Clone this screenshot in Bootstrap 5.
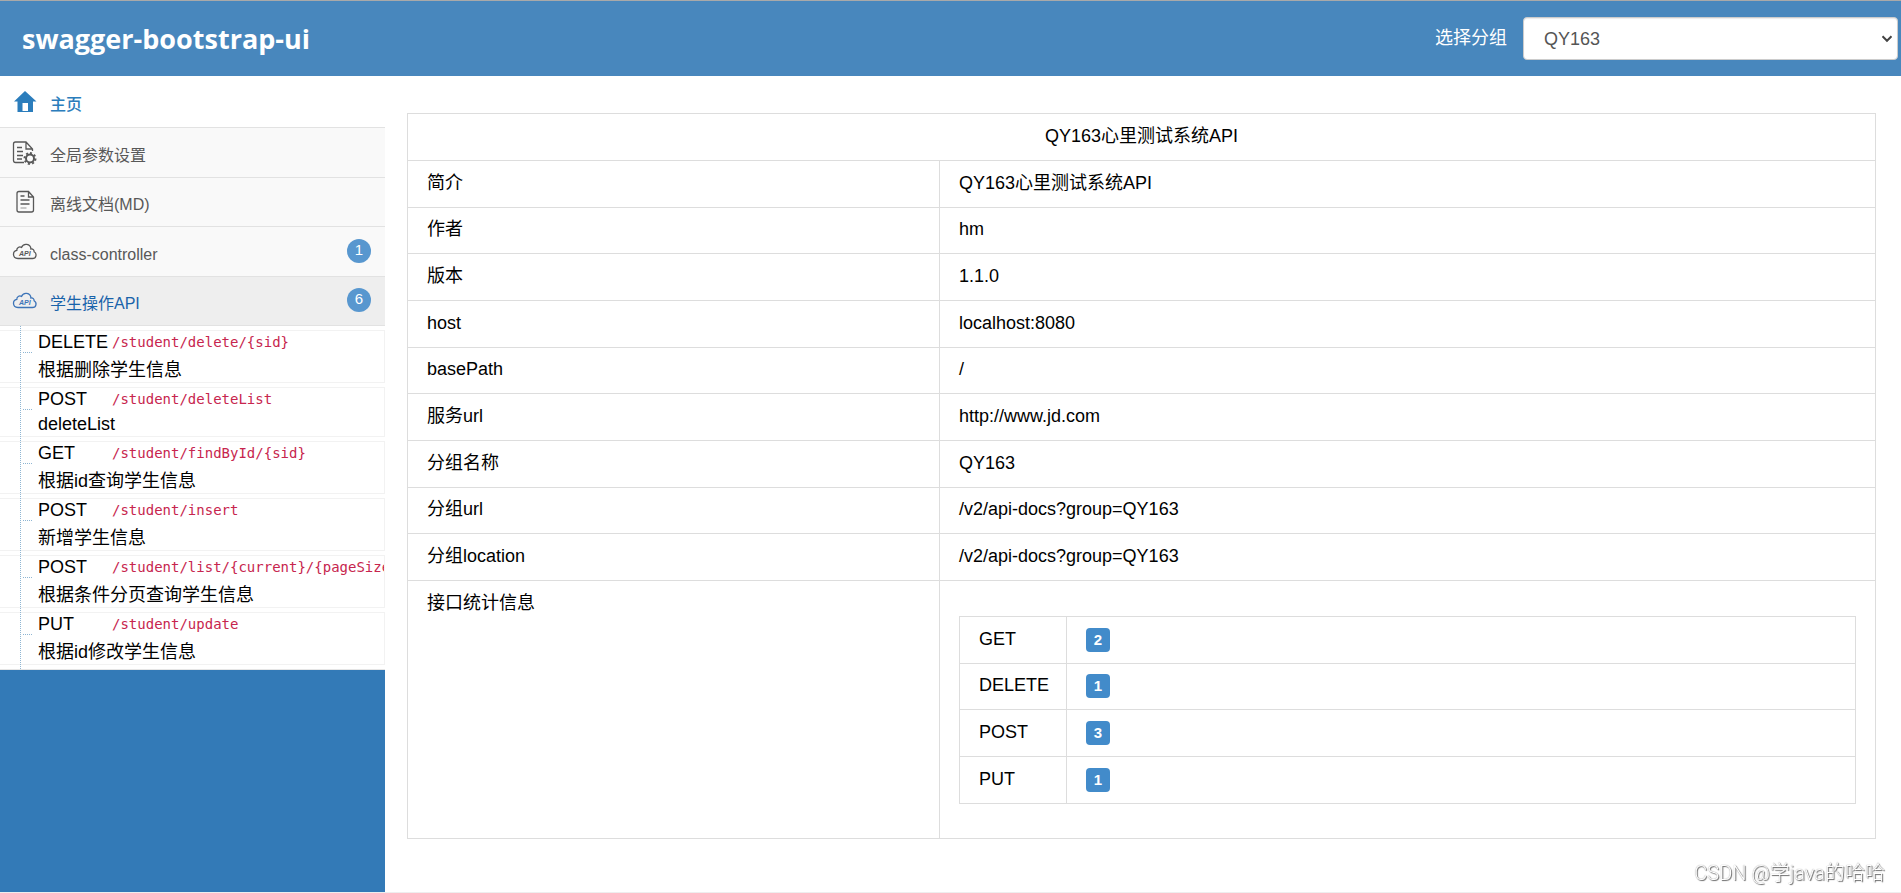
<!DOCTYPE html>
<html lang="zh-CN">
<head>
<meta charset="utf-8">
<meta name="viewport" content="width=device-width, initial-scale=1">
<title>swagger-bootstrap-ui</title>
<link href="https://cdn.jsdelivr.net/npm/bootstrap@5.3.0/dist/css/bootstrap.min.css" rel="stylesheet">
<style>
body { font-family: "Liberation Sans", "Noto Sans CJK SC", sans-serif; font-size: 18px; line-height: 25px; color: #000; background: #fff; }
.top-bar { height: 76px; background: #4887bd; border-top: 1px solid #a9a9a9; padding: 0 3px 0 22px; color: #fff; }
.brand { font-family: "Open Sans", "Noto Sans CJK SC", sans-serif; font-size: 27px; font-weight: 700; line-height: 36px; color: #fff; }
.group-select { width: 375px; height: 43px; padding: 2px 30px 0 20px; border: 1px solid #ccc; border-radius: 4px; font-size: 18px; color: #555;
  box-shadow: inset 0 1px 1px rgba(0,0,0,.08); background-position: right 4px center; background-size: 12px 8px;
  background-image: url("data:image/svg+xml,%3Csvg xmlns='http://www.w3.org/2000/svg' viewBox='0 0 12 8'%3E%3Cpath d='M1.5 1.2 6 5.8l4.500-4.600' fill='none' stroke='%23444' stroke-width='2'/%3E%3C/svg%3E"); }
.page { border-bottom: 1px solid #eee; }
.side { width: 385px; background: #337ab7; }
.menu > li > a { height: 50px; padding: 6px 14px 0 12px; background: #f9f9f9; border-bottom: 1px solid #e2e2e2; color: #585858; font-size: 16px; line-height: 24px; text-decoration: none; }
.menu > li:nth-child(odd) > a { height: 49px; }
.menu > li.home > a { height: 52px; background: #fff; color: #2b7dbc; font-weight: 500; }
.menu > li.open > a { background: #eee; color: #1963aa; }
.menu svg { width: 26px; height: 26px; margin: 0 12px 8px 0; flex: none; }
.menu .count { width: 24px; height: 24px; margin-bottom: 8px; border-radius: 50%; background: #5897cf; color: #fff; font-size: 15px; line-height: 22px; text-align: center; }
.api-list { position: relative; background: #fff; border-bottom: 1px solid #e5e5e5; padding: 4px 0; }
.api-list::before { content: ""; position: absolute; top: 0; bottom: 0; left: 20px; border-left: 1px dotted #8fb6d3; z-index: 1; }
.api-list li { position: relative; border: 1px solid #f2f2f2; border-left: 0; padding-left: 38px; overflow: hidden; }
.api-list li + li { margin-top: 4px; }
.api-list li::before { content: ""; position: absolute; left: 23px; top: 21px; width: 9px; border-top: 1px dotted #8fb6d3; }
.api-list a { display: block; color: #000; text-decoration: none; }
.api-line { display: flex; height: 24px; line-height: 22px; white-space: nowrap; }
.verb { width: 71px; flex: none; }
.api-line code { padding: 0 3px; font: 14px/22px "DejaVu Sans Mono", monospace; color: #c7254e; background: #fff; }
.note { display: block; height: 27px; line-height: 31px; }
.note-latin { height: 24px; line-height: 24px; }
.content { padding: 37px 25px 50px 22px; min-width: 0; }
.info { margin: 0; color: #000; border-color: #ddd; }
.info > :not(caption) > * > * { padding: 0 19px 2px; height: 47px; border-color: #ddd; background: transparent; color: #000; vertical-align: middle; font-weight: 400; }
.info > tbody > tr:nth-child(3n+2) > * { height: 46px; }
.info > tbody > tr.totals > th { vertical-align: top; padding-top: 10px; }
.info > tbody > tr.totals > td { padding: 35px 19px 34px; }
.key { width: 532px; }
.info .info th { width: 107px; padding-right: 17px; }
.tag { display: inline-block; width: 24px; height: 24px; border-radius: 4px; background: #428bca; color: #fff; font-size: 15px; font-weight: 700; line-height: 24px; text-align: center; vertical-align: middle; }
.watermark { position: fixed; right: 16px; bottom: 6px; font-family: Roboto, "Noto Sans CJK SC", sans-serif; font-size: 20px; font-weight: 300; line-height: 28px; color: #fff; text-shadow: 1px 1px 1px #666, 0 0 1px #888; }
</style>
</head>
<body class="d-flex flex-column min-vh-100">
<header class="top-bar d-flex align-items-center justify-content-between">
  <a class="brand text-decoration-none" href="#">swagger-bootstrap-ui</a>
  <div class="d-flex align-items-center gap-3">
    <label for="group">选择分组</label>
    <select id="group" class="form-select group-select"><option>QY163</option></select>
  </div>
</header>
<div class="page d-flex flex-grow-1">
  <nav class="side flex-shrink-0">
    <ul class="menu list-unstyled m-0">
      <li class="home"><a href="#" class="d-flex align-items-center">
        <svg viewBox="0 0 26 26"><path fill="#2b7dbc" d="M13 3 2 13.500h3.500V24h15.500V13.500h3.500z"/><path fill="#fff" d="M10.500 15h5.500v8h-5.500z"/></svg>主页</a></li>
      <li><a href="#" class="d-flex align-items-center">
        <svg viewBox="0 0 26 26" fill="none" stroke="#585858" stroke-width="1.300"><path d="M12 23.500H3.500q-2 0-2-2V5q0-2 2-2H14l6.500 7v2M14 3v7h6.500M5 8.500h5M5 12.500h6M5 16.500h6M5 20h5"/><circle cx="18" cy="19.500" r="4" stroke-width="2"/><path stroke-width="2" stroke-dasharray="2 2.300" d="M18 14a5.500 5.500 0 1 1-.01 0z"/></svg>全局参数设置</a></li>
      <li><a href="#" class="d-flex align-items-center">
        <svg viewBox="0 0 26 26" fill="none" stroke="#585858" stroke-width="1.300"><path d="M7 3.500h9.500l5 5.500v13q0 2-2 2H7q-2 0-2-2V5.500q0-2 2-2zM16.500 3.500V9h5M8.500 8h4M8.500 12h9M8.500 16h9"/><path stroke="#aaa" d="M8.500 20h6"/></svg>离线文档(MD)</a></li>
      <li><a href="#" class="d-flex align-items-center">
        <svg viewBox="0 0 26 26"><path fill="none" stroke="#585858" stroke-width="1.300" d="M6 20.500C2.800 20.500 1.500 18.500 1.500 16.300c0-2.300 1.600-3.600 3.300-3.900-.2-2.600 2.500-4.300 4.700-3 1.800-4.700 9.200-3.900 9.400 1.600 2.200-.3 3.300 1 3.200 2.800 3.200 1.800 2.200 6.700-1.600 6.700z"/><text x="7" y="17.500" font-size="7" font-weight="700" font-style="italic" fill="#585858">API</text></svg>class-controller<span class="count ms-auto">1</span></a></li>
      <li class="open"><a href="#" class="d-flex align-items-center">
        <svg viewBox="0 0 26 26"><path fill="none" stroke="#3d74b8" stroke-width="1.300" d="M6 20.500C2.800 20.500 1.500 18.500 1.500 16.300c0-2.300 1.600-3.600 3.300-3.900-.2-2.600 2.500-4.300 4.700-3 1.800-4.700 9.200-3.900 9.400 1.600 2.200-.3 3.300 1 3.200 2.800 3.200 1.800 2.200 6.700-1.600 6.700z"/><text x="7" y="17.500" font-size="7" font-weight="700" font-style="italic" fill="#3d74b8">API</text></svg>学生操作API<span class="count ms-auto">6</span></a>
        <ul class="api-list list-unstyled">
          <li><a href="#"><span class="api-line"><span class="verb">DELETE</span><code>/student/delete/{sid}</code></span><span class="note">根据删除学生信息</span></a></li>
          <li><a href="#"><span class="api-line"><span class="verb">POST</span><code>/student/deleteList</code></span><span class="note note-latin">deleteList</span></a></li>
          <li><a href="#"><span class="api-line"><span class="verb">GET</span><code>/student/findById/{sid}</code></span><span class="note">根据id查询学生信息</span></a></li>
          <li><a href="#"><span class="api-line"><span class="verb">POST</span><code>/student/insert</code></span><span class="note">新增学生信息</span></a></li>
          <li><a href="#"><span class="api-line"><span class="verb">POST</span><code>/student/list/{current}/{pageSize}</code></span><span class="note">根据条件分页查询学生信息</span></a></li>
          <li><a href="#"><span class="api-line"><span class="verb">PUT</span><code>/student/update</code></span><span class="note">根据id修改学生信息</span></a></li>
        </ul>
      </li>
    </ul>
  </nav>
  <main class="content flex-grow-1">
    <table class="table table-bordered info">
      <thead><tr><th colspan="2" class="text-center">QY163心里测试系统API</th></tr></thead>
      <tbody>
        <tr><th class="key">简介</th><td>QY163心里测试系统API</td></tr>
        <tr><th>作者</th><td>hm</td></tr>
        <tr><th>版本</th><td>1.1.0</td></tr>
        <tr><th>host</th><td>localhost:8080</td></tr>
        <tr><th>basePath</th><td>/</td></tr>
        <tr><th>服务url</th><td>http://www.jd.com</td></tr>
        <tr><th>分组名称</th><td>QY163</td></tr>
        <tr><th>分组url</th><td>/v2/api-docs?group=QY163</td></tr>
        <tr><th>分组location</th><td>/v2/api-docs?group=QY163</td></tr>
        <tr class="totals"><th>接口统计信息</th><td>
          <table class="table table-bordered info">
            <tbody>
              <tr><th>GET</th><td><span class="tag">2</span></td></tr>
              <tr><th>DELETE</th><td><span class="tag">1</span></td></tr>
              <tr><th>POST</th><td><span class="tag">3</span></td></tr>
              <tr><th>PUT</th><td><span class="tag">1</span></td></tr>
            </tbody>
          </table>
        </td></tr>
      </tbody>
    </table>
  </main>
</div>
<div class="watermark">CSDN @学java的哈哈</div>
<script src="https://cdn.jsdelivr.net/npm/bootstrap@5.3.0/dist/js/bootstrap.bundle.min.js"></script>
</body>
</html>
